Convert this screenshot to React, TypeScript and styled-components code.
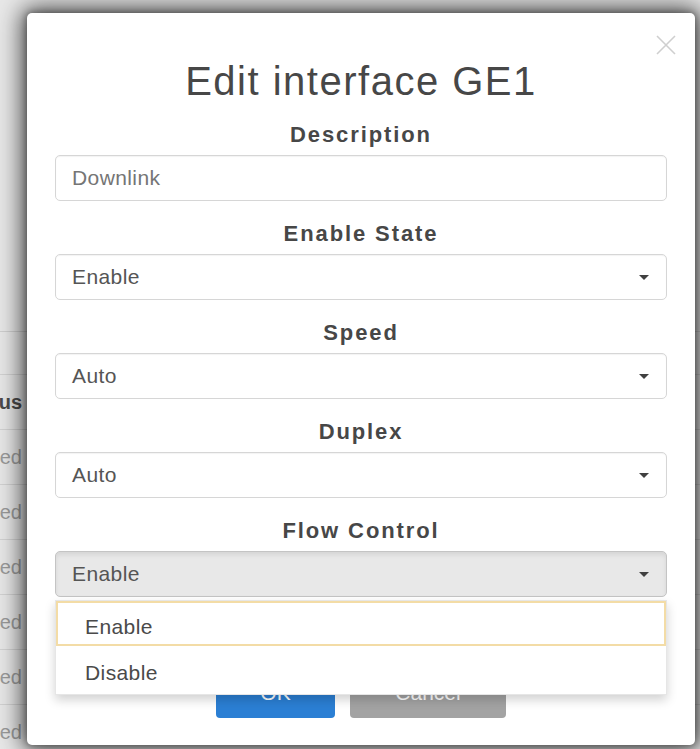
import React from 'react'
import styled, { createGlobalStyle } from 'styled-components'

const GlobalStyle = createGlobalStyle`
  html, body {
    margin: 0;
    padding: 0;
    background: #e2e2e2;
    font-family: "Liberation Sans", Arial, sans-serif;
    overflow: hidden;
  }
`

const Page = styled.div`
  position: relative;
  width: 700px;
  height: 749px;
  overflow: hidden;
  background: #e8e8e8;
`

const PageTable = styled.div`
  display: flex;
  flex-direction: column;
  padding-top: 331px;
`

const Divider = styled.div`
  height: 42px;
  border-top: 1px solid #cfcfcf;
`

const TableRow = styled.div`
  display: flex;
  height: 54px;
  border-top: 1px solid #d2d2d2;
  align-items: center;
`

const Cell = styled.div<{ $head?: boolean }>`
  width: 22px;
  display: flex;
  justify-content: flex-end;
  overflow: hidden;
  white-space: nowrap;
  font-size: 20px;
  font-weight: ${({ $head }) => ($head ? 700 : 400)};
  color: ${({ $head }) => ($head ? '#4a4a4a' : '#9a9a9a')};
`

const Modal = styled.div`
  position: absolute;
  left: 27px;
  top: 13px;
  width: 668px;
  box-sizing: border-box;
  padding: 44px 28px 27px;
  background: #fff;
  border-radius: 5px;
  box-shadow: 0 0 24px 5px rgba(0, 0, 0, 0.7), 0 0 6px 1px rgba(0, 0, 0, 0.3);
  display: flex;
  flex-direction: column;
`

const Close = styled.button`
  position: absolute;
  right: 18px;
  top: 21px;
  width: 22px;
  height: 22px;
  padding: 0;
  border: none;
  background: none;
  display: flex;
`

const Title = styled.h1`
  margin: 0 0 17px;
  text-align: center;
  font-size: 40px;
  line-height: 48px;
  font-weight: 400;
  letter-spacing: 1.5px;
  color: #474747;
`

const Group = styled.div`
  display: flex;
  flex-direction: column;
  margin-bottom: 20px;
  position: relative;
`

const Label = styled.label`
  text-align: center;
  font-size: 22px;
  line-height: 26px;
  font-weight: 700;
  letter-spacing: 1.9px;
  color: #474747;
  margin-bottom: 7px;
`

const Field = styled.div<{ $active?: boolean; $muted?: boolean }>`
  height: 46px;
  box-sizing: border-box;
  display: flex;
  align-items: center;
  justify-content: space-between;
  padding: 0 17px 0 16px;
  border: 1px solid ${({ $active }) => ($active ? '#c4c4c4' : '#d6d6d6')};
  border-radius: 5px;
  background: ${({ $active }) => ($active ? '#e8e8e8' : '#fff')};
  box-shadow: ${({ $active }) =>
    $active ? 'inset 0 3px 4px rgba(0,0,0,0.08)' : 'inset 0 1px 1px rgba(0,0,0,0.05)'};
  font-size: 21px;
  letter-spacing: 0.4px;
  color: ${({ $muted }) => ($muted ? '#757575' : '#555')};
`

const Caret = styled.span`
  width: 0;
  height: 0;
  border-left: 5px solid transparent;
  border-right: 5px solid transparent;
  border-top: 5px solid #404040;
`

const Menu = styled.ul`
  position: absolute;
  left: 0;
  right: 0;
  top: 100%;
  margin: 3px 0 0;
  padding: 0;
  list-style: none;
  background: #fff;
  border: 1px solid #e6e6e6;
  box-shadow: 0 5px 10px rgba(0, 0, 0, 0.18);
  z-index: 2;
`

const Option = styled.li<{ $focused?: boolean }>`
  height: ${({ $focused }) => ($focused ? '45px' : '48px')};
  box-sizing: border-box;
  display: flex;
  align-items: center;
  padding: 6px 0 0 27px;
  font-size: 21px;
  letter-spacing: 0.4px;
  color: #4a4a4a;
  border: 2px solid ${({ $focused }) => ($focused ? '#f3dca6' : 'transparent')};
`

const Footer = styled.div`
  display: flex;
  justify-content: center;
  gap: 15px;
  margin-top: 51px;
`

const Button = styled.button<{ $primary?: boolean }>`
  height: 50px;
  width: ${({ $primary }) => ($primary ? '119px' : '156px')};
  border: none;
  border-radius: 4px;
  font-family: inherit;
  font-size: 21px;
  color: #fff;
  background: ${({ $primary }) => ($primary ? '#2b7fd4' : '#a3a3a3')};
`

const fields = [
  { label: 'Enable State', value: 'Enable' },
  { label: 'Speed', value: 'Auto' },
  { label: 'Duplex', value: 'Auto' },
]

export default function App() {
  return (
    <>
      <GlobalStyle />
      <Page>
        <PageTable>
          <Divider />
          <TableRow>
            <Cell $head>Status</Cell>
          </TableRow>
          {[0, 1, 2, 3, 4, 5].map((i) => (
            <TableRow key={i}>
              <Cell>Enabled</Cell>
            </TableRow>
          ))}
        </PageTable>

        <Modal>
          <Close aria-label="Close">
            <svg width="22" height="22" viewBox="0 0 22 22">
              <path d="M2 2 L20 20 M20 2 L2 20" stroke="#cfcfcf" strokeWidth="1.6" fill="none" />
            </svg>
          </Close>
          <Title>Edit interface GE1</Title>

          <Group>
            <Label>Description</Label>
            <Field $muted>Downlink</Field>
          </Group>

          {fields.map((f) => (
            <Group key={f.label}>
              <Label>{f.label}</Label>
              <Field>
                {f.value}
                <Caret />
              </Field>
            </Group>
          ))}

          <Group>
            <Label>Flow Control</Label>
            <Field $active>
              Enable
              <Caret />
            </Field>
            <Menu>
              <Option $focused>Enable</Option>
              <Option>Disable</Option>
            </Menu>
          </Group>

          <Footer>
            <Button $primary>OK</Button>
            <Button>Cancel</Button>
          </Footer>
        </Modal>
      </Page>
    </>
  )
}
